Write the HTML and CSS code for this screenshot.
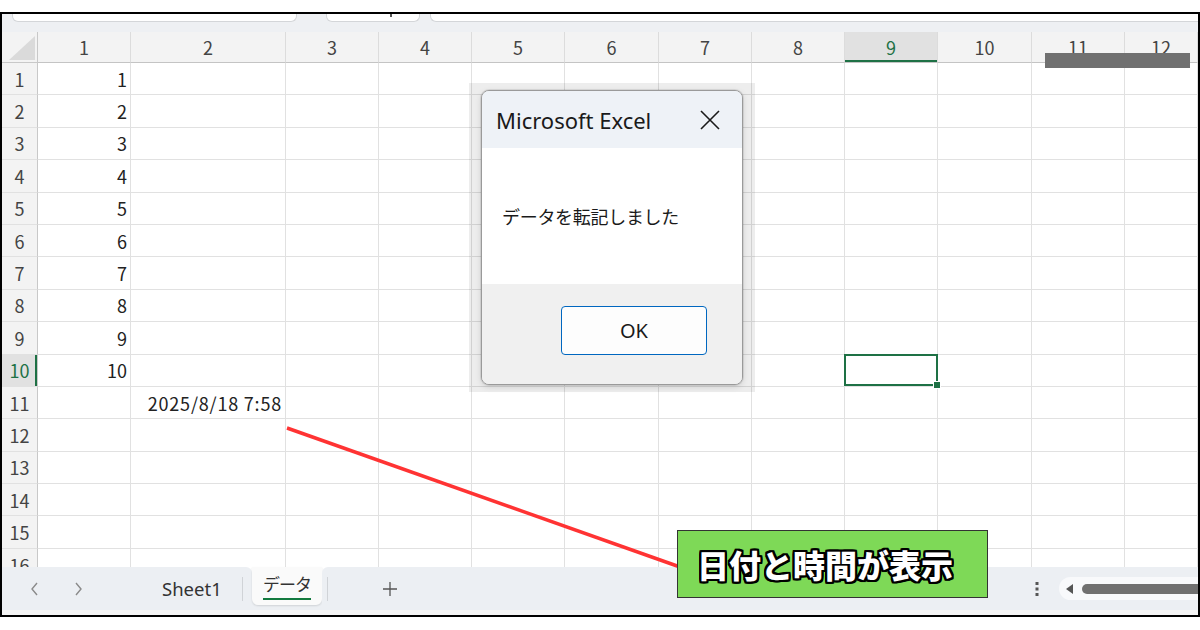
FILE: index.html
```html
<!DOCTYPE html>
<html lang="ja">
<head>
<meta charset="utf-8">
<title>Excel</title>
<link rel="stylesheet" href="styles.css">
</head>
<body>
<div class="frame">
  <div class="fbar">
    <div class="fbox fbox-name"></div>
    <div class="fbox fbox-fx"><span class="caret"></span></div>
    <div class="fbox fbox-input"></div>
  </div>

  <div class="sheet">
    <div class="corner"><svg width="26" height="24" viewBox="0 0 26 24"><polygon points="26,0 26,24 0,24" fill="#dadada"/></svg></div>
    <div class="ch">1</div><div class="ch">2</div><div class="ch">3</div><div class="ch">4</div><div class="ch">5</div><div class="ch">6</div><div class="ch">7</div><div class="ch">8</div><div class="ch sel">9</div><div class="ch">10</div><div class="ch">11</div><div class="ch">12</div>

    <div class="rh">1</div><div class="c num">1</div><div class="c"></div><div class="c"></div><div class="c"></div><div class="c"></div><div class="c"></div><div class="c"></div><div class="c"></div><div class="c"></div><div class="c"></div><div class="c"></div><div class="c"></div>
    <div class="rh">2</div><div class="c num">2</div><div class="c"></div><div class="c"></div><div class="c"></div><div class="c"></div><div class="c"></div><div class="c"></div><div class="c"></div><div class="c"></div><div class="c"></div><div class="c"></div><div class="c"></div>
    <div class="rh">3</div><div class="c num">3</div><div class="c"></div><div class="c"></div><div class="c"></div><div class="c"></div><div class="c"></div><div class="c"></div><div class="c"></div><div class="c"></div><div class="c"></div><div class="c"></div><div class="c"></div>
    <div class="rh">4</div><div class="c num">4</div><div class="c"></div><div class="c"></div><div class="c"></div><div class="c"></div><div class="c"></div><div class="c"></div><div class="c"></div><div class="c"></div><div class="c"></div><div class="c"></div><div class="c"></div>
    <div class="rh">5</div><div class="c num">5</div><div class="c"></div><div class="c"></div><div class="c"></div><div class="c"></div><div class="c"></div><div class="c"></div><div class="c"></div><div class="c"></div><div class="c"></div><div class="c"></div><div class="c"></div>
    <div class="rh">6</div><div class="c num">6</div><div class="c"></div><div class="c"></div><div class="c"></div><div class="c"></div><div class="c"></div><div class="c"></div><div class="c"></div><div class="c"></div><div class="c"></div><div class="c"></div><div class="c"></div>
    <div class="rh">7</div><div class="c num">7</div><div class="c"></div><div class="c"></div><div class="c"></div><div class="c"></div><div class="c"></div><div class="c"></div><div class="c"></div><div class="c"></div><div class="c"></div><div class="c"></div><div class="c"></div>
    <div class="rh">8</div><div class="c num">8</div><div class="c"></div><div class="c"></div><div class="c"></div><div class="c"></div><div class="c"></div><div class="c"></div><div class="c"></div><div class="c"></div><div class="c"></div><div class="c"></div><div class="c"></div>
    <div class="rh">9</div><div class="c num">9</div><div class="c"></div><div class="c"></div><div class="c"></div><div class="c"></div><div class="c"></div><div class="c"></div><div class="c"></div><div class="c"></div><div class="c"></div><div class="c"></div><div class="c"></div>
    <div class="rh sel">10</div><div class="c num">10</div><div class="c"></div><div class="c"></div><div class="c"></div><div class="c"></div><div class="c"></div><div class="c"></div><div class="c"></div><div class="c act"></div><div class="c"></div><div class="c"></div><div class="c"></div>
    <div class="rh">11</div><div class="c"></div><div class="c num date">2025/8/18 7:58</div><div class="c"></div><div class="c"></div><div class="c"></div><div class="c"></div><div class="c"></div><div class="c"></div><div class="c"></div><div class="c"></div><div class="c"></div><div class="c"></div>
    <div class="rh">12</div><div class="c"></div><div class="c"></div><div class="c"></div><div class="c"></div><div class="c"></div><div class="c"></div><div class="c"></div><div class="c"></div><div class="c"></div><div class="c"></div><div class="c"></div><div class="c"></div>
    <div class="rh">13</div><div class="c"></div><div class="c"></div><div class="c"></div><div class="c"></div><div class="c"></div><div class="c"></div><div class="c"></div><div class="c"></div><div class="c"></div><div class="c"></div><div class="c"></div><div class="c"></div>
    <div class="rh">14</div><div class="c"></div><div class="c"></div><div class="c"></div><div class="c"></div><div class="c"></div><div class="c"></div><div class="c"></div><div class="c"></div><div class="c"></div><div class="c"></div><div class="c"></div><div class="c"></div>
    <div class="rh">15</div><div class="c"></div><div class="c"></div><div class="c"></div><div class="c"></div><div class="c"></div><div class="c"></div><div class="c"></div><div class="c"></div><div class="c"></div><div class="c"></div><div class="c"></div><div class="c"></div>
    <div class="rh">16</div><div class="c"></div><div class="c"></div><div class="c"></div><div class="c"></div><div class="c"></div><div class="c"></div><div class="c"></div><div class="c"></div><div class="c"></div><div class="c"></div><div class="c"></div><div class="c"></div>
  </div>

  <div class="tabbar">
    <div class="tb-left">
      <svg class="chev chev-l" width="10" height="16" viewBox="0 0 10 16"><polyline points="7,2 2,8 7,14" fill="none" stroke="#8a8a8a" stroke-width="1.4"/></svg>
      <svg class="chev chev-r" width="10" height="16" viewBox="0 0 10 16"><polyline points="3,2 8,8 3,14" fill="none" stroke="#8a8a8a" stroke-width="1.4"/></svg>
      <span class="tab">Sheet1</span>
      <span class="tsep"></span>
    </div>
    <div class="tb-mid">
      <div class="tab-active"><span class="tab-jp">データ</span></div>
    </div>
    <div class="tb-right">
      <span class="tsep tsep2"></span>
      <svg class="plus" width="14" height="14" viewBox="0 0 14 14"><path d="M7 0V14M0 7H14" stroke="#555" stroke-width="1.3"/></svg>
      <span class="spacer"></span>
      <svg class="dots" width="4" height="14" viewBox="0 0 4 14"><rect x="0.5" y="0" width="3" height="3" fill="#555"/><rect x="0.5" y="5.5" width="3" height="3" fill="#555"/><rect x="0.5" y="11" width="3" height="3" fill="#555"/></svg>
      <div class="track">
        <svg class="tri" width="7" height="10" viewBox="0 0 7 10"><polygon points="7,0 7,10 0,5" fill="#555"/></svg>
        <span class="thumb"></span>
      </div>
    </div>
  </div>
  <div class="bstrip"></div>
</div>

<div class="redact"></div>

<div class="dlg-wrap">
  <div class="dlg">
    <div class="dlg-title">
      <span>Microsoft Excel</span>
      <svg class="close" width="20" height="20" viewBox="0 0 20 20"><path d="M1 1L19 19M19 1L1 19" stroke="#1a1a1a" stroke-width="1.6"/></svg>
    </div>
    <div class="dlg-body">データを転記しました</div>
    <div class="dlg-foot"><div class="okbtn">OK</div></div>
  </div>
</div>

<svg class="arrow" width="1200" height="630" viewBox="0 0 1200 630"><line x1="287" y1="428" x2="680" y2="567" stroke="#ff3333" stroke-width="3.5"/></svg>

<div class="callout">日付と時間が表示</div>
</body>
</html>
```

FILE: styles.css
```css
html, body {
  margin: 0;
  padding: 0;
}
body {
  width: 1200px;
  height: 630px;
  position: relative;
  overflow: hidden;
  background: #ffffff;
  font-family: "Noto Sans CJK JP", "Noto Sans", sans-serif;
  color: #222;
}
.frame {
  margin-top: 12px;
  width: 1200px;
  height: 605px;
  border: 2px solid #000;
  box-sizing: border-box;
  display: flex;
  flex-direction: column;
  overflow: hidden;
  background: #fff;
}

/* formula bar remnant */
.fbar {
  height: 18px;
  flex: none;
  background: #eef0f3;
  display: flex;
  align-items: flex-start;
  padding-left: 10px;
}
.fbox {
  height: 8px;
  background: #fff;
  border: 1px solid #d4d6d9;
  border-top: none;
  border-radius: 0 0 6px 6px;
  box-sizing: border-box;
  position: relative;
}
.fbox-name { width: 285px; }
.fbox-fx { width: 94px; margin-left: 29px; }
.fbox-input { flex: 1; margin-left: 10px; border-right: none; border-radius: 0 0 0 6px; }
.caret {
  position: absolute;
  left: 63px;
  top: 0;
  width: 2px;
  height: 3px;
  background: #555;
}

/* grid */
.sheet {
  height: 535px;
  flex: none;
  overflow: hidden;
  display: grid;
  grid-template-columns: 36px 93px 155px 93px 93px 93px 94px 93px 93px 93px 94px 93px 1fr;
  grid-template-rows: 31px repeat(16, 32.4px);
  font-size: 18px;
}
.corner {
  background: #f3f3f3;
  border-right: 1px solid #c8c8c8;
  border-bottom: 1px solid #c8c8c8;
  box-sizing: border-box;
  padding: 4px 0 0 7px;
}
.corner svg { display: block; }
.ch {
  background: #f3f3f3;
  border-right: 1px solid #dcdcdc;
  border-bottom: 1px solid #c4c4c4;
  box-sizing: border-box;
  display: flex;
  align-items: center;
  justify-content: center;
  color: #444;
}
.ch.sel {
  background: #e1e1e1;
  color: #1e7145;
  box-shadow: inset 0 -2px 0 #1e7145;
}
.rh {
  background: #f3f3f3;
  border-right: 1px solid #c8c8c8;
  border-bottom: 1px solid #e1e1e1;
  box-sizing: border-box;
  display: flex;
  align-items: center;
  justify-content: center;
  color: #444;
}
.rh.sel {
  background: #e1e1e1;
  color: #1e7145;
  box-shadow: inset -2px 0 0 #1e7145;
}
.c {
  border-right: 1px solid #e1e1e1;
  border-bottom: 1px solid #e1e1e1;
  box-sizing: border-box;
  display: flex;
  align-items: center;
  white-space: nowrap;
  color: #222;
}
.c.num {
  justify-content: flex-end;
  padding-right: 3px;
}
.c.date {
  letter-spacing: 0.8px;
  padding-right: 3px;
}
.c.act { position: relative; }
.c.act::before {
  content: "";
  position: absolute;
  left: -1px;
  top: -1px;
  right: -1px;
  bottom: 0;
  border: 2px solid #1e7145;
  z-index: 3;
}
.c.act::after {
  content: "";
  position: absolute;
  right: -4px;
  bottom: -3px;
  width: 6px;
  height: 6px;
  background: #1e7145;
  border: 1px solid #fff;
  z-index: 4;
}

/* tab bar */
.tabbar {
  height: 43px;
  flex: none;
  display: flex;
  background: #fff;
  font-family: "Noto Sans", "Noto Sans CJK JP", sans-serif;
}
.tb-left {
  width: 250px;
  flex: none;
  background: #eceff3;
  border-top-right-radius: 6px;
  display: flex;
  align-items: center;
}
.chev { display: block; }
.chev-l { margin-left: 28px; }
.chev-r { margin-left: 33px; }
.tab {
  margin-left: 79px;
  font-size: 18.5px;
  color: #333;
}
.tsep {
  width: 1px;
  height: 24px;
  background: #d0d3d7;
  margin-left: 20px;
}
.tb-mid {
  width: 70px;
  flex: none;
  background: #eceff3;
}
.tab-active {
  height: 38px;
  background: #fafafa;
  border-radius: 0 0 6px 6px;
  box-shadow: 0 1px 2px rgba(0,0,0,0.12);
  box-sizing: border-box;
  padding: 5px 0 0 11px;
}
.tab-jp {
  display: inline-block;
  font-family: "Noto Sans CJK JP", sans-serif;
  font-size: 17px;
  letter-spacing: -1px;
  color: #333;
  line-height: 24px;
  border-bottom: 2.5px solid #137a3f;
  padding-bottom: 2px;
}
.tb-right {
  flex: 1;
  background: #eceff3;
  border-top-left-radius: 6px;
  display: flex;
  align-items: center;
}
.tsep2 { margin-left: 5px; }
.plus { display: block; margin-left: 55px; }
.spacer { flex: 1; }
.dots { display: block; margin-right: 20px; }
.track {
  width: 139px;
  height: 23px;
  background: #f8f9fb;
  border-radius: 12px 0 0 12px;
  display: flex;
  align-items: center;
  padding-left: 7px;
  box-sizing: border-box;
}
.tri { display: block; }
.thumb {
  flex: 1;
  height: 10px;
  margin-left: 9px;
  background: #707070;
  border-radius: 5px 0 0 5px;
}
.bstrip {
  height: 5px;
  flex: none;
  background: #f4f4f4;
}

/* redaction bar over header */
.redact {
  position: absolute;
  left: 1045px;
  top: 53px;
  width: 145px;
  height: 15px;
  background: #707070;
}

/* dialog */
.dlg-wrap {
  position: absolute;
  left: 469px;
  top: 83px;
  width: 286px;
  height: 309px;
  background: rgba(0,0,0,0.07);
  padding: 7px 12px;
  box-sizing: border-box;
}
.dlg {
  width: 262px;
  height: 295px;
  border: 1px solid #9a9a9a;
  box-shadow: 0 0 0 1px rgba(0,0,0,0.08), 0 2px 6px rgba(0,0,0,0.12);
  border-radius: 8px;
  overflow: hidden;
  box-sizing: border-box;
  display: flex;
  flex-direction: column;
  background: #f0f0f0;
}
.dlg-title {
  height: 57px;
  flex: none;
  background: #eef2f7;
  display: flex;
  align-items: center;
  padding-left: 14px;
  font-family: "Noto Sans", "Open Sans", sans-serif;
  font-size: 22px;
  color: #1a1a1a;
}
.dlg-title span { flex: 1; }
.close { display: block; margin-right: 22px; }
.dlg-body {
  height: 136px;
  flex: none;
  background: #fff;
  display: flex;
  align-items: center;
  padding-left: 20px;
  font-size: 18px;
  color: #1a1a1a;
  letter-spacing: -0.3px;
}
.dlg-foot {
  flex: 1;
  background: #f0f0f0;
  padding: 22px 0 0 79px;
}
.okbtn {
  width: 146px;
  height: 49px;
  box-sizing: border-box;
  border: 1.5px solid #0067c0;
  border-radius: 4px;
  background: #fdfdfd;
  display: flex;
  align-items: center;
  justify-content: center;
  font-family: "Noto Sans", "Open Sans", sans-serif;
  font-size: 20px;
  color: #1a1a1a;
}

/* annotation */
.arrow {
  position: absolute;
  left: 0;
  top: 0;
  pointer-events: none;
}
.callout {
  position: absolute;
  left: 677px;
  top: 530px;
  width: 311px;
  height: 68px;
  box-sizing: border-box;
  background: #7ed957;
  border: 1px solid #333;
  display: flex;
  align-items: center;
  padding-left: 19px;
  font-family: "Noto Sans CJK JP", sans-serif;
  font-weight: 900;
  font-size: 32px;
  color: #fff;
  text-shadow:
    2px 0 0 #000, -2px 0 0 #000, 0 2px 0 #000, 0 -2px 0 #000,
    2px 2px 0 #000, -2px -2px 0 #000, 2px -2px 0 #000, -2px 2px 0 #000,
    1px 2px 0 #000, 2px 1px 0 #000, -1px 2px 0 #000, -2px 1px 0 #000,
    1px -2px 0 #000, 2px -1px 0 #000, -1px -2px 0 #000, -2px -1px 0 #000;
}
```
